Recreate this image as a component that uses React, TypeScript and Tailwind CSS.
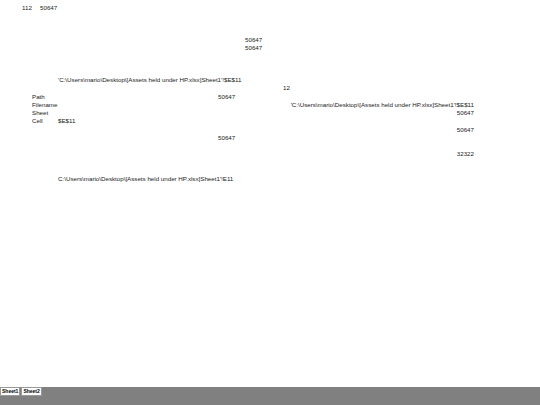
const path = "'C:\\Users\\mario\\Desktop\\[Assets held under HP.xlsx]Sheet1'!$E$11";
const path2 = "C:\\Users\\mario\\Desktop\\[Assets held under HP.xlsx]Sheet1'!E11";

// cols: 22 | 32 | 40 | 58 | 218 | 245 | 283 | 290..474
const grid = 'grid grid-cols-[10px_8px_18px_160px_27px_38px_7px_184px] pl-[22px] items-center whitespace-nowrap';

type Cell = { col: number; text: string; right?: boolean };
type Row = { h: string; cells: Cell[] };

const rows: Row[] = [
  { h: 'h-[4px]', cells: [] },
  { h: 'h-[8px]', cells: [{ col: 1, text: '112' }, { col: 3, text: '50647' }] },
  { h: 'h-[24px]', cells: [] },
  { h: 'h-[8px]', cells: [{ col: 6, text: '50647' }] },
  { h: 'h-[8px]', cells: [{ col: 6, text: '50647' }] },
  { h: 'h-[24px]', cells: [] },
  { h: 'h-[8px]', cells: [{ col: 4, text: path }] },
  { h: 'h-[8.5px]', cells: [{ col: 7, text: '12' }] },
  { h: 'h-[8.5px]', cells: [{ col: 2, text: 'Path' }, { col: 5, text: '50647' }] },
  { h: 'h-[8px]', cells: [{ col: 2, text: 'Filename' }, { col: 8, text: path, right: true }] },
  { h: 'h-[8px]', cells: [{ col: 2, text: 'Sheet' }, { col: 8, text: '50647', right: true }] },
  { h: 'h-[8.5px]', cells: [{ col: 2, text: 'Cell' }, { col: 4, text: '$E$11' }] },
  { h: 'h-[8px]', cells: [{ col: 8, text: '50647', right: true }] },
  { h: 'h-[8.5px]', cells: [{ col: 5, text: '50647' }] },
  { h: 'h-[8px]', cells: [] },
  { h: 'h-[8px]', cells: [{ col: 8, text: '32322', right: true }] },
  { h: 'h-[17px]', cells: [] },
  { h: 'h-[8px]', cells: [{ col: 4, text: path2 }] },
];

const colStart = [
  '',
  'col-start-1',
  'col-start-2',
  'col-start-3',
  'col-start-4',
  'col-start-5',
  'col-start-6',
  'col-start-7',
  'col-start-8',
];

export default function App() {
  return (
    <div
      className="w-[540px] h-[405px] flex flex-col bg-white text-[6.2px] leading-[8px] text-[#222]"
      style={{ fontFamily: '"Liberation Sans", Arial, sans-serif' }}
    >
      <div className="flex-1 flex flex-col">
        {rows.map((r, i) => (
          <div key={i} className={`${grid} ${r.h}`}>
            {r.cells.map((c, j) => (
              <div
                key={j}
                className={`${colStart[c.col]} row-start-1 ${c.right ? 'flex justify-end' : ''}`}
              >
                {c.text}
              </div>
            ))}
          </div>
        ))}
      </div>

      {/* sheet tabs */}
      <div className="h-[18px] bg-[#808080] flex items-start gap-[1px]">
        <div className="h-[9px] px-[1px] bg-white border border-[#9a9a9a] text-[5px] leading-[7px] font-bold text-black">
          Sheet1
        </div>
        <div className="h-[9px] px-[1px] bg-white border border-[#9a9a9a] text-[5px] leading-[7px] font-bold text-black">
          Sheet2
        </div>
      </div>
    </div>
  );
}
